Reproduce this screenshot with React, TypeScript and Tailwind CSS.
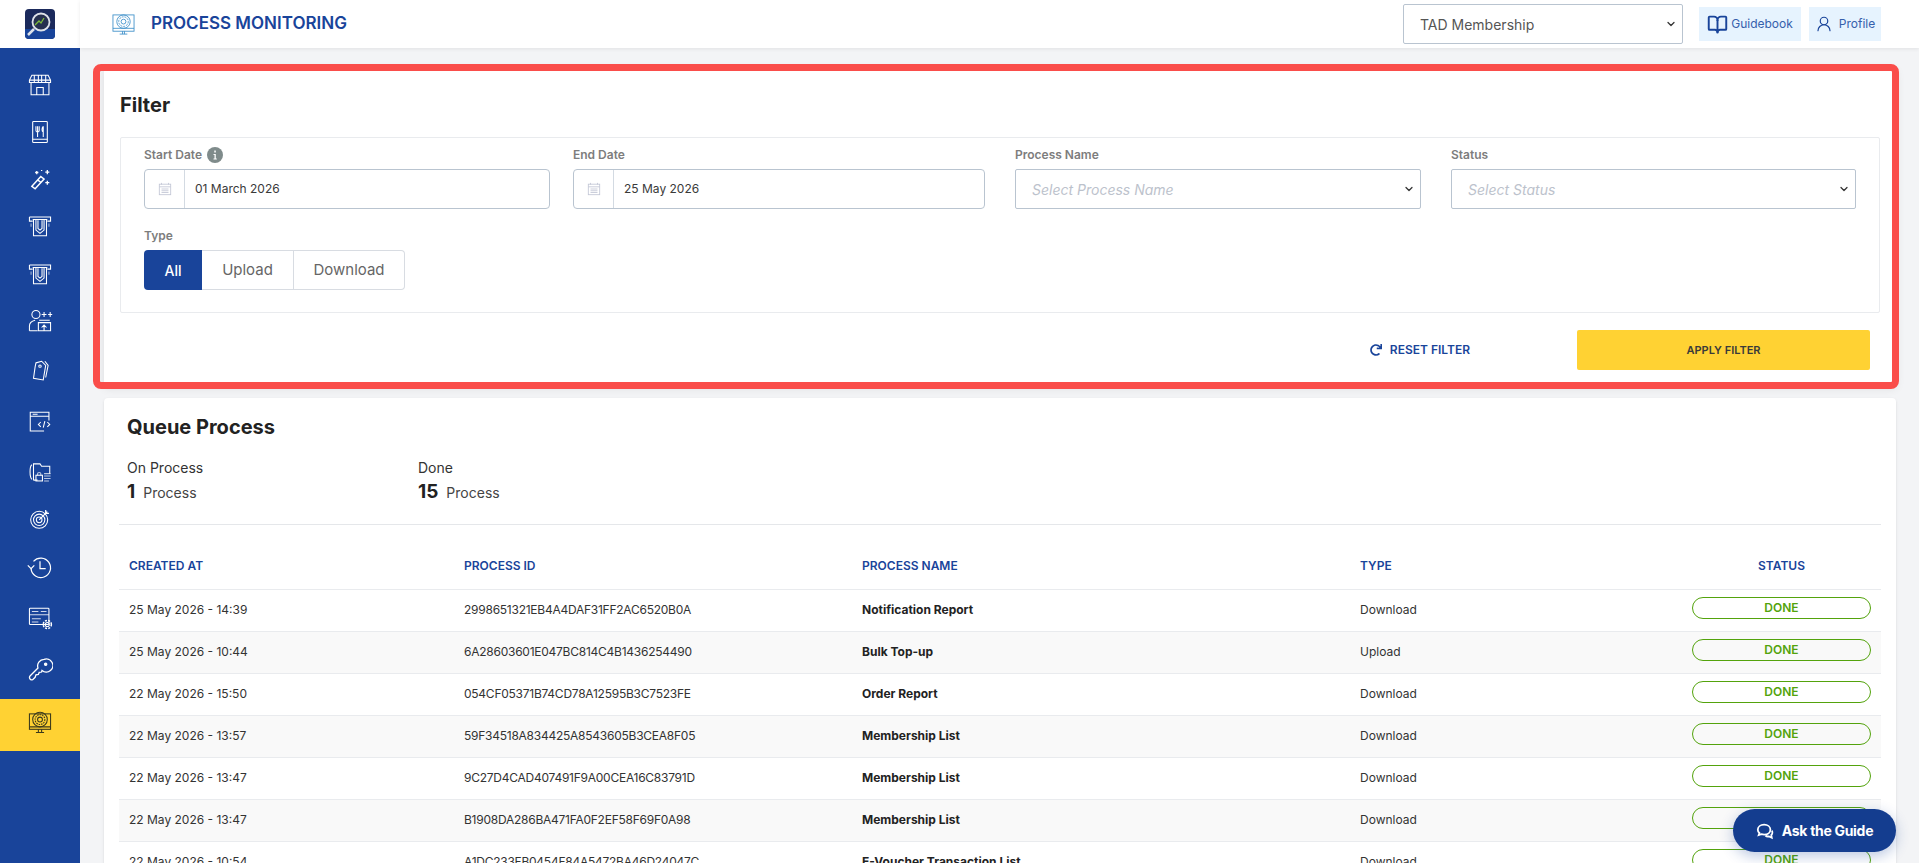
import { ReactNode } from "react";
import { BookOpen, ChevronDown, UserRound } from "lucide-react";
import { FaRedo } from "react-icons/fa";

const rows = [
  ["25 May 2026 - 14:39", "2998651321EB4A4DAF31FF2AC6520B0A", "Notification Report", "Download"],
  ["25 May 2026 - 10:44", "6A28603601E047BC814C4B1436254490", "Bulk Top-up", "Upload"],
  ["22 May 2026 - 15:50", "054CF05371B74CD78A12595B3C7523FE", "Order Report", "Download"],
  ["22 May 2026 - 13:57", "59F34518A834425A8543605B3CEA8F05", "Membership List", "Download"],
  ["22 May 2026 - 13:47", "9C27D4CAD407491F9A00CEA16C83791D", "Membership List", "Download"],
  ["22 May 2026 - 13:47", "B1908DA286BA471FA0F2EF58F69F0A98", "Membership List", "Download"],
  ["22 May 2026 - 10:54", "A1DC233FB0454F84A5472BA46D24047C", "E-Voucher Transaction List", "Download"],
];

// hand drawn nav icons, all on a 32 box
function NavIcon({ children, dark }: { children: ReactNode; dark?: boolean }) {
  return (
    <svg viewBox="0 0 32 32" fill="none" stroke={dark ? "#3b3a1c" : "#ffffff"} strokeWidth="1.3" className="w-[26px] h-[26px]">
      {children}
    </svg>
  );
}

function MonitorGear({ dark }: { dark?: boolean }) {
  return (
    <NavIcon dark={dark}>
      <rect x="3" y="6" width="26" height="19" />
      <path d="M3 22h26M11 29h10M14 25v4M18 25v4" />
      <circle cx="16" cy="13" r="3" />
      <circle cx="16" cy="13" r="6" strokeDasharray="2 1" />
      <circle cx="16" cy="13" r="9" />
    </NavIcon>
  );
}

function Atm() {
  return (
    <NavIcon>
      <path d="M3 5h26v5h-4M3 5v5h4M7 8h18" />
      <path d="M8 8v20h16V8M11 8v13l5 4 5-4V8M13.500 9v10l2.500 2 2.500-2V9" />
      <path d="M5 13v4M27 13v4" strokeOpacity="0.6" />
    </NavIcon>
  );
}

const navItems = [
  {
    h: "h-[46px]",
    icon: (
      <NavIcon>
        <path d="M6 4h20l3 6v3H3v-3zM3 10h26M5 13v15h22V13M12 28v-9h8v9M9 4v9M14 4v9M18 4v9M23 4v9" />
      </NavIcon>
    ),
  },
  {
    h: "h-[47px]",
    icon: (
      <NavIcon>
        <rect x="7" y="3" width="18" height="26" rx="1" />
        <path d="M7 25h18M11 9v5c0 1 1 2 2 2s2-1 2-2V9M13 9v13M20 9c-2 2-2 6 0 7v6M20 9v13" />
      </NavIcon>
    ),
  },
  {
    h: "h-[47px]",
    icon: (
      <NavIcon>
        <path d="M6 25l11-12 4 3-11 12zM13 17l4 3" strokeWidth="1.8" />
        <path d="M12 6v4M10 8h4M25 5v5M22.500 7.500h5M25 18v5M22.500 20.500h5M18 5v1" strokeWidth="1.6" />
      </NavIcon>
    ),
  },
  { h: "h-[48px]", icon: <Atm /> },
  { h: "h-[47px]", icon: <Atm /> },
  {
    h: "h-[48px]",
    icon: (
      <NavIcon>
        <circle cx="11" cy="8" r="5" />
        <path d="M3 28v-6c0-4 3-6 7-7M3 28h10M18 8h6M21 5v6M26 8h5M28.500 5v6M14 18h15v10H14zM15 15h13M21 28v-7M18 24l3-3 3 3" />
      </NavIcon>
    ),
  },
  {
    h: "h-[51px]",
    icon: (
      <NavIcon>
        <path d="M11 6l7-2 5 5-3 18-12-2 2-14z" />
        <circle cx="16" cy="10" r="1.500" />
        <path d="M22 4l4 5-3 15" />
      </NavIcon>
    ),
  },
  {
    h: "h-[51px]",
    icon: (
      <NavIcon>
        <path d="M27 14V4H4v23h17M4 9h23M7 6.500h6" />
        <path d="M17 16l-3 3 3 3M22 15l-2 8M25 16l3 3-3 3" />
      </NavIcon>
    ),
  },
  {
    h: "h-[49px]",
    icon: (
      <NavIcon>
        <path d="M6 7c-3 2-3 15 0 18M8 26V6h8l2 3h10v9M8 26h5" />
        <rect x="11" y="20" width="8" height="7" />
        <path d="M13 20v-2c0-2 4-2 4 0v2M21 18h8M21 21h8M21 24h8M21 27h6" strokeOpacity="0.7" />
      </NavIcon>
    ),
  },
  {
    h: "h-[46px]",
    icon: (
      <NavIcon>
        <circle cx="15" cy="17" r="10.500" />
        <circle cx="15" cy="17" r="7" />
        <circle cx="15" cy="17" r="3.500" />
        <path d="M15 17l10-10M23 5v4h4" strokeWidth="1.500" />
      </NavIcon>
    ),
  },
  {
    h: "h-[49px]",
    icon: (
      <NavIcon>
        <path d="M5 18a12 12 0 1 0 3-9" strokeWidth="1.500" />
        <path d="M1 14l4 4 4-4M16 9v9h7" strokeWidth="1.500" />
      </NavIcon>
    ),
  },
  {
    h: "h-[53px]",
    icon: (
      <NavIcon>
        <rect x="3" y="4" width="24" height="20" rx="1" />
        <path d="M3 12h24M6 8h8M17 8h7M6 17h11M6 21h8" strokeOpacity="0.8" />
        <circle cx="25" cy="24" r="2.500" />
        <circle cx="25" cy="24" r="5" strokeDasharray="2.500 1.500" strokeWidth="1.800" />
      </NavIcon>
    ),
  },
  {
    h: "h-[52px]",
    icon: (
      <NavIcon>
        <path d="M21 3a8 8 0 0 0-7.500 10.500L4 23c-2 2-.5 6 3 5l3-3 1-3 3-.5 1-2.500 3-.5.500-2A8 8 0 1 0 21 3z" strokeWidth="1.600" />
        <circle cx="23" cy="9" r="1.500" fill="#ffffff" />
      </NavIcon>
    ),
  },
];

const labelClass = "h-[24px] flex items-center gap-[5px] text-[12px] font-semibold text-[#7d7d7d]";

function DateField({ label, value, info, width }: { label: string; value: string; info?: boolean; width: string }) {
  return (
    <div className={width}>
      <div className={labelClass}>
        {label}
        {info && (
          <svg viewBox="0 0 16 16" className="w-[16px] h-[16px]">
            <circle cx="8" cy="8" r="8" fill="#7f8b8b" />
            <path d="M6.500 7h2.300v4.500h1v1H6.500v-1h1V8h-1zM7.300 3.500h1.500V5.500H7.300z" fill="#ffffff" />
          </svg>
        )}
      </div>
      <div className="mt-[2px] h-[40px] flex items-center rounded-[4px] border border-[#b9c4d0] bg-white">
        <div className="w-[40px] h-full flex items-center justify-center border-r border-[#d3dae2]">
          <svg viewBox="0 0 16 16" fill="none" stroke="#c3c7d6" className="w-[14px] h-[14px]">
            <rect x="1.500" y="2.500" width="13" height="12" />
            <path d="M1.500 5.500h13M4 1v2M12 1v2M4 8h8M4 10h8M4 12h8" />
          </svg>
        </div>
        <span className="pl-[10px] text-[12px] text-[#3a3a3a]">{value}</span>
      </div>
    </div>
  );
}

function SelectField({ label, placeholder, width }: { label: string; placeholder: string; width: string }) {
  return (
    <div className={width}>
      <div className={labelClass}>{label}</div>
      <div className="mt-[2px] h-[40px] flex items-center justify-between pl-[16px] pr-[5px] rounded-[2px] border border-[#b9c4d0] bg-white">
        <span className="text-[14px] italic text-[#bcc2cc]">{placeholder}</span>
        <ChevronDown className="w-[12px] h-[12px] text-[#333333]" strokeWidth={2.5} />
      </div>
    </div>
  );
}

export default function App() {
  return (
    <div className="relative h-[863px] overflow-hidden flex bg-[#f3f4f6] text-[#222222] font-['Inter','Noto_Sans',sans-serif]">
      <aside className="w-[80px] shrink-0 flex flex-col bg-[#19449a]">
        <div className="h-[48px] flex items-center justify-center bg-white">
          <svg viewBox="0 0 30 30" className="w-[30px] h-[30px]">
            <rect width="30" height="30" rx="4" fill="#1b2a5c" />
            <path d="M0 20h30v6a4 4 0 0 1-4 4H4a4 4 0 0 1-4-4z" fill="#19449a" />
            <circle cx="16" cy="13" r="8.500" fill="#26304f" stroke="#dfe3ea" strokeWidth="1.800" />
            <path d="M10 16l4-4 2 2 3-5" fill="none" stroke="#7dbb3c" strokeWidth="1.300" />
            <path d="M9 20l-6 6" stroke="#dfe3ea" strokeWidth="2.500" />
          </svg>
        </div>
        <nav className="flex flex-col items-center pt-[14px]">
          {navItems.map((item, i) => (
            <div key={i} className={`w-full flex items-center justify-center ${item.h}`}>
              {item.icon}
            </div>
          ))}
        </nav>
        <div className="mt-[3px] h-[52px] pb-[6px] flex items-center justify-center bg-[#ffd233]">
          <MonitorGear dark />
        </div>
      </aside>

      <div className="flex-1 min-w-0 flex flex-col">
        <header className="h-[48px] shrink-0 flex items-center bg-white shadow-[0_1px_4px_rgba(0,0,0,0.08)] pl-[32px] pr-[38px]">
          <svg viewBox="0 0 24 24" fill="none" stroke="#3d8fc9" strokeWidth="0.900" className="w-[23px] h-[23px]">
            <rect x="1" y="2" width="22" height="17" />
            <path d="M1 16h22M8 22h8M11 19v3M13 19v3" />
            <circle cx="12" cy="9" r="2.500" />
            <circle cx="12" cy="9" r="5" strokeDasharray="2 1" />
            <circle cx="12" cy="9" r="7" />
          </svg>
          <h1 className="ml-[16px] text-[17px] font-semibold text-[#19449a]">PROCESS MONITORING</h1>
          <div className="ml-auto w-[280px] h-[40px] flex items-center justify-between pl-[16px] pr-[5px] rounded-[2px] border border-[#b9c4d0] text-[14px] text-[#555555]">
            TAD Membership
            <ChevronDown className="w-[12px] h-[12px] text-[#333333]" strokeWidth={2.5} />
          </div>
          <button className="ml-[16px] w-[102px] h-[34px] flex items-center justify-center gap-[3px] bg-[#e6f3fe] text-[12px] text-[#3560ac]">
            <BookOpen className="w-[21px] h-[21px] text-[#19449a]" strokeWidth={2.2} />
            Guidebook
          </button>
          <button className="ml-[8px] w-[72px] h-[34px] flex items-center justify-center gap-[6px] bg-[#e6f3fe] text-[12px] text-[#3560ac]">
            <UserRound className="w-[18px] h-[18px] text-[#19449a]" strokeWidth={1.6} />
            Profile
          </button>
        </header>

        <main className="flex-1 min-h-0 pl-[24px] pr-[23px]">
          <section className="mt-[20px] h-[318px] rounded-[4px] bg-white shadow-[0_2px_10px_rgba(0,0,0,0.1)] px-[16px]">
            <h2 className="h-[69px] pt-[22px] text-[20px] leading-[30px] font-bold">Filter</h2>
            <div className="h-[176px] rounded-[2px] border border-[#e9ebee] pl-[23px] pt-[5px]">
              <div className="flex">
                <DateField label="Start Date" value="01 March 2026" info width="w-[406px] mr-[23px]" />
                <DateField label="End Date" value="25 May 2026" width="w-[412px] mr-[30px]" />
                <SelectField label="Process Name" placeholder="Select Process Name" width="w-[406px] mr-[30px]" />
                <SelectField label="Status" placeholder="Select Status" width="w-[405px]" />
              </div>
              <div className={`mt-[15px] ${labelClass}`}>Type</div>
              <div className="mt-[2px] flex w-fit text-[15px]">
                <span className="w-[58px] h-[40px] flex items-center justify-center rounded-l-[4px] bg-[#19449a] text-[14px] text-white font-medium">All</span>
                <span className="w-[92px] h-[40px] flex items-center justify-center border-y border-r border-[#d8dce2] text-[#666666]">Upload</span>
                <span className="w-[111px] h-[40px] flex items-center justify-center border-y border-r border-[#d8dce2] rounded-r-[4px] text-[#666666]">Download</span>
              </div>
            </div>
            <div className="mt-[17px] flex items-center">
              <button className="ml-auto flex items-center gap-[8px] text-[12px] font-semibold text-[#19449a]">
                <FaRedo className="w-[12px] h-[12px]" />
                RESET FILTER
              </button>
              <button className="ml-[107px] mr-[10px] w-[293px] h-[40px] rounded-[2px] bg-[#ffd233] text-[11px] font-semibold text-[#3a3a3a]">APPLY FILTER</button>
            </div>
          </section>

          <section className="mt-[12px] rounded-t-[4px] bg-white shadow-sm px-[15px] h-[600px]">
            <h2 className="pl-[8px] pt-[14px] text-[20px] leading-[30px] font-bold">Queue Process</h2>
            <div className="pl-[8px] mt-[16px] h-[67px] flex border-b border-[#e5e7ea]">
              <div className="w-[291px]">
                <div className="text-[14px] leading-[20px] text-[#333333]">On Process</div>
                <div className="flex items-baseline gap-[8px] text-[14px] text-[#444444]">
                  <b className="text-[19px] font-bold text-[#222222]">1</b> Process
                </div>
              </div>
              <div>
                <div className="text-[14px] leading-[20px] text-[#333333]">Done</div>
                <div className="flex items-baseline gap-[8px] text-[14px] text-[#444444]">
                  <b className="text-[19px] font-bold text-[#222222]">15</b> Process
                </div>
              </div>
            </div>
            <table className="mt-[21px] w-[1762px] table-fixed text-[12px]">
              <colgroup>
                <col className="w-[345px]" />
                <col className="w-[398px]" />
                <col className="w-[498px]" />
                <col className="w-[332px]" />
                <col />
              </colgroup>
              <thead>
                <tr className="h-[43px] text-left text-[12px] text-[#19449a]">
                  <th className="pl-[10px] pb-[3px] font-semibold">CREATED AT</th>
                  <th className="pb-[3px] font-semibold">PROCESS ID</th>
                  <th className="pb-[3px] font-semibold">PROCESS NAME</th>
                  <th className="pb-[3px] font-semibold">TYPE</th>
                  <th className="pr-[10px] pb-[3px] text-center font-semibold">STATUS</th>
                </tr>
              </thead>
              <tbody>
                {rows.map((r, i) => (
                  <tr key={i} className={`h-[42px] border-t border-[#e9ebee] ${i % 2 === 1 ? "bg-[#f9f9f9]" : "bg-white"}`}>
                    <td className="pl-[10px] text-[#333333]">{r[0]}</td>
                    <td className="tracking-[-0.25px] text-[#333333]">{r[1]}</td>
                    <td className="font-bold text-[#222222]">{r[2]}</td>
                    <td className="text-[#333333]">{r[3]}</td>
                    <td>
                      <div className="ml-auto mr-[10px] mb-[4px] h-[22px] w-[179px] flex items-center justify-center rounded-full border border-[#53a30c] text-[12px] font-semibold text-[#53a30c]">
                        DONE
                      </div>
                    </td>
                  </tr>
                ))}
              </tbody>
            </table>
          </section>
        </main>
      </div>

      {/* red marker drawn over the filter card */}
      <div className="absolute left-[93px] top-[64px] w-[1806px] h-[325px] rounded-[8px] border-[7px] border-[#fa4d4a] pointer-events-none" />

      <button className="absolute left-[1733px] top-[809px] w-[163px] h-[43px] flex items-center justify-center gap-[8px] rounded-full bg-[#143d8f] text-[14px] font-bold tracking-[-0.3px] text-white shadow-[0_4px_14px_rgba(25,68,154,0.3)]">
        <svg viewBox="0 0 20 20" fill="none" stroke="#ffffff" strokeWidth="2" className="w-[18px] h-[18px]">
          <path d="M9 3c-4 0-7 2.300-7 5.500 0 1.500.7 2.800 1.800 3.700L3 14.500l3-1c1 .3 2 .5 3 .5 4 0 7-2.300 7-5.500S13 3 9 3z" />
          <path d="M17.500 9.500c1 1 1 4-.5 5l.5 3-3-1.500c-1.500.3-3 0-4-1" />
        </svg>
        Ask the Guide
      </button>
    </div>
  );
}
